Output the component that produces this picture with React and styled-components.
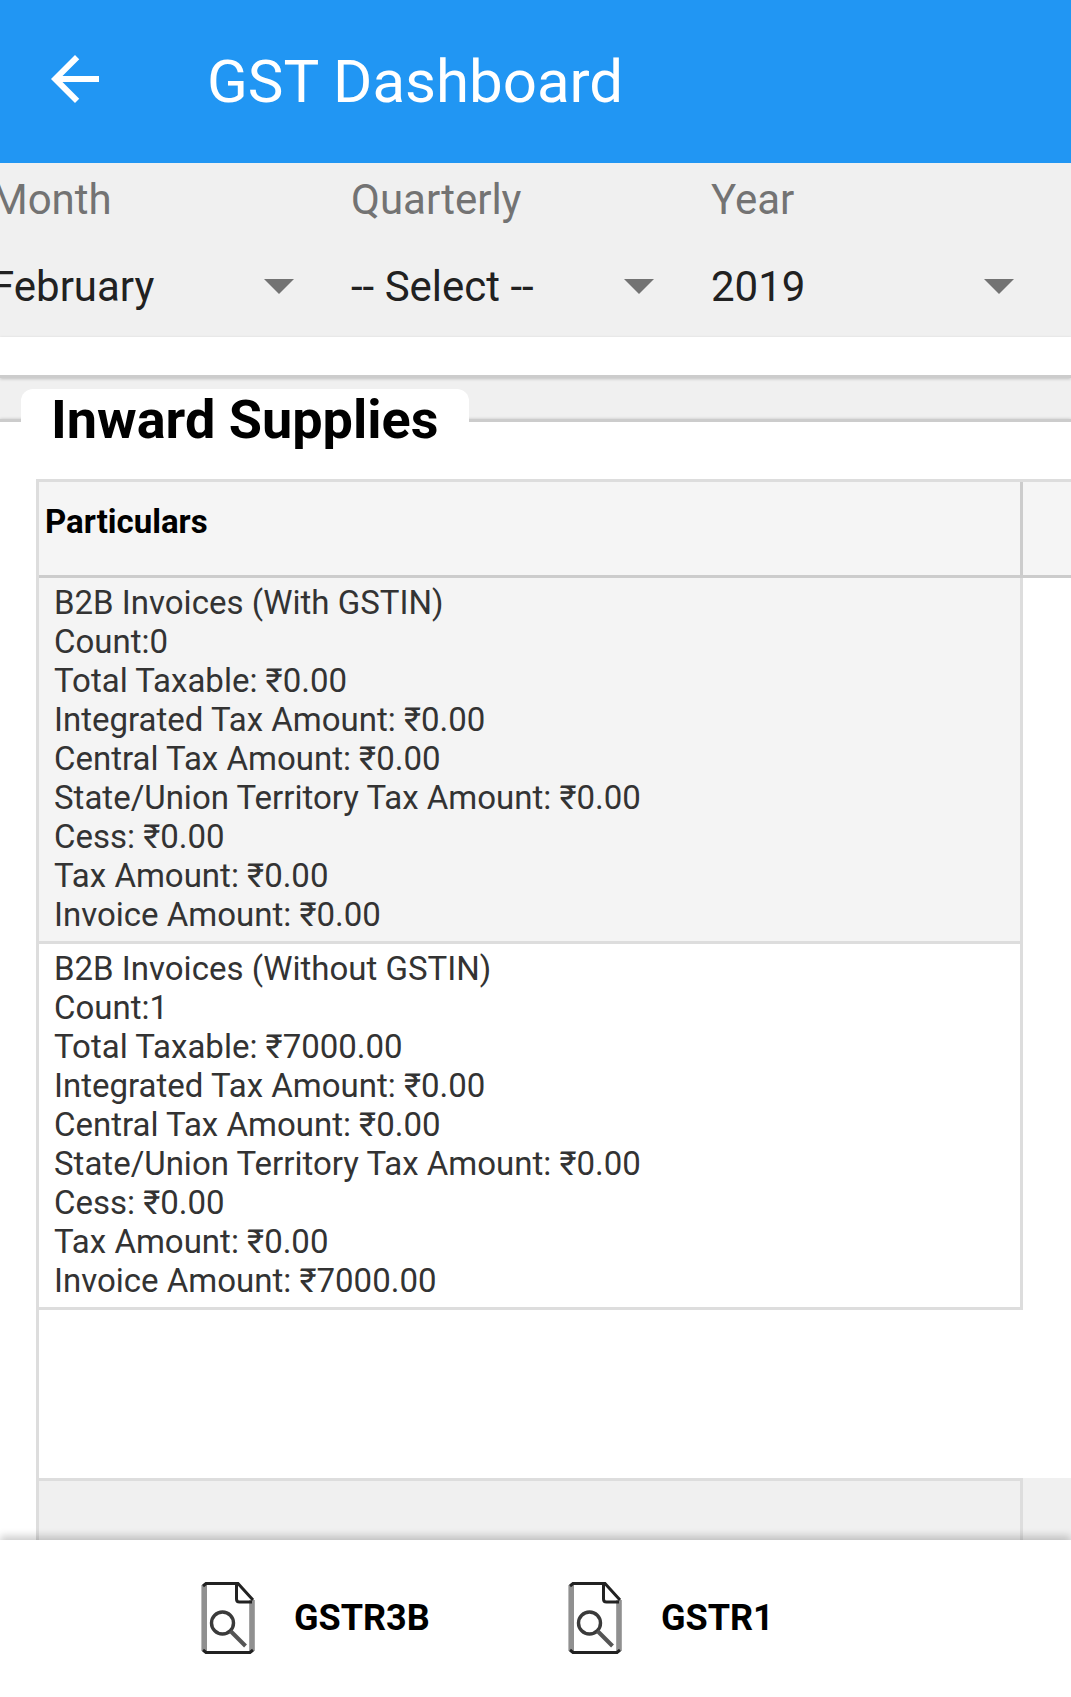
import React, { useState } from 'react';
import styled, { createGlobalStyle } from 'styled-components';
import { MdArrowBack } from 'react-icons/md';

const GlobalStyle = createGlobalStyle`
  * {
    box-sizing: border-box;
  }

  body {
    margin: 0;
    background: #f0f0f0;
    font-family: Roboto, sans-serif;
  }
`;

const Page = styled.div`
  display: flex;
  flex-direction: column;
  height: 100vh;
  overflow: hidden;
`;

const Header = styled.header`
  display: flex;
  flex: none;
  align-items: center;
  gap: 96px;
  height: 163px;
  padding: 0 39px 5px;
  background: #2196f3;
  color: white;
`;

const BackButton = styled.button`
  display: flex;
  padding: 0;
  border: none;
  background: none;
  color: inherit;
  font-size: 72px;
  cursor: pointer;
`;

const Title = styled.h1`
  margin: 0;
  padding-top: 5px;
  font-size: 60px;
  font-weight: 400;
  line-height: 72px;
`;

const Filters = styled.form`
  display: flex;
  flex: none;
  gap: 57px;
  height: 174px;
  margin-left: -9px;
  padding-top: 13px;
  background: #f0f0f0;
`;

const Field = styled.div`
  flex: 0 0 303px;
`;

const Label = styled.label`
  display: block;
  margin-bottom: 26px;
  color: #737373;
  font-size: 42px;
  line-height: 48px;
`;

const SelectBox = styled.div`
  display: grid;
  align-items: center;

  & > * {
    grid-area: 1 / 1;
  }
`;

const Select = styled.select`
  width: 100%;
  height: 72px;
  padding: 0;
  border: none;
  appearance: none;
  background: transparent;
  color: #212121;
  font-family: inherit;
  font-size: 42px;
`;

const Caret = styled.span`
  justify-self: end;
  border: 15px solid transparent;
  border-top-color: #737373;
  border-bottom: none;
  pointer-events: none;
`;

const Strip = styled.div`
  flex: none;
  height: 41px;
  border-bottom: 3px solid #ccc;
  background: white;
  box-shadow: 0 1px 3px rgba(0, 0, 0, 0.2);
`;

const Main = styled.main`
  flex: 1;
  min-height: 0;
  padding-top: 11px;
  overflow: hidden;
`;

const Supplies = styled.fieldset`
  min-width: 0;
  margin: 0;
  padding: 27px 0 0;
  border: none;
  border-top: 3px solid #ccc;
  background: white;
  box-shadow: 0 0 3px rgba(0, 0, 0, 0.2);
`;

const Legend = styled.legend`
  margin-left: 21px;
  padding: 0 31px 2px 30px;
  border-radius: 12px;
  background: white;
  color: black;
  font-size: 54px;
  font-weight: 700;
  line-height: 61px;
`;

const Grid = styled.div`
  margin-left: 36px;
  border-top: 3px solid #ddd;
  border-left: 3px solid #ddd;
`;

const Table = styled.table`
  width: 100%;
  border-collapse: separate;
  border-spacing: 0;
  table-layout: fixed;
`;

const ExtraCol = styled.col`
  width: 48px;
`;

const HeadCell = styled.th`
  height: 96px;
  padding: 20px 6px 0;
  border-bottom: 3px solid #ccc;
  border-right: ${props => (props.$divider ? '3px solid #ccc' : 'none')};
  background: #f5f5f5;
  color: black;
  font-size: 33px;
  line-height: 39px;
  text-align: left;
  vertical-align: top;
`;

const Cell = styled.td`
  padding: 5px 15px 7px;
  border-right: 3px solid #ddd;
  border-bottom: 3px solid #ddd;
  background: ${props => (props.$shaded ? '#f4f4f4' : 'white')};
  color: #333;
  font-size: 33px;
  line-height: 39px;
`;

const Spacer = styled.td`
  height: 168px;
`;

const FootCell = styled.td`
  height: 120px;
  border-top: ${props => (props.$divider ? '3px solid #ddd' : 'none')};
  border-right: ${props => (props.$divider ? '3px solid #ddd' : 'none')};
  background: #f0f0f0;
`;

const BottomBar = styled.footer`
  position: relative;
  display: flex;
  flex: none;
  height: 157px;
  padding: 0 0 2px 201px;
  background: white;
  box-shadow: 0 -4px 8px rgba(0, 0, 0, 0.2);
`;

const ReportButton = styled.button`
  display: flex;
  align-items: center;
  gap: 39px;
  min-width: 367px;
  padding: 0;
  border: none;
  background: none;
  color: black;
  font-family: inherit;
  font-size: 36px;
  font-weight: 700;
  cursor: pointer;
`;

const filters = [
  { id: 'month', label: 'Month', options: ['February', 'January', 'March'] },
  { id: 'quarterly', label: 'Quarterly', options: ['-- Select --', 'Jan - Mar', 'Apr - Jun'] },
  { id: 'year', label: 'Year', options: ['2019', '2018', '2017'] }
];

const supplies = [
  {
    name: 'B2B Invoices (With GSTIN)',
    count: 0,
    taxable: '0.00',
    integrated: '0.00',
    central: '0.00',
    state: '0.00',
    cess: '0.00',
    tax: '0.00',
    invoice: '0.00'
  },
  {
    name: 'B2B Invoices (Without GSTIN)',
    count: 1,
    taxable: '7000.00',
    integrated: '0.00',
    central: '0.00',
    state: '0.00',
    cess: '0.00',
    tax: '0.00',
    invoice: '7000.00'
  }
];

function ReportIcon() {
  return (
    <svg width="54" height="72" viewBox="0 0 54 72" fill="none" aria-hidden="true">
      <path d="M3.2 3v66M51 18v51" stroke="#909090" strokeWidth="5.6" />
      <path d="M2 4L5 1.5H37L52 18M2 68l3 2.5h44l3-2.5" stroke="#222" strokeWidth="3" />
      <path d="M35.5 2v15q0 3 3 3H51" stroke="#222" strokeWidth="3" />
      <circle cx="21.5" cy="41" r="11" stroke="#3a3a3a" strokeWidth="3.4" />
      <path d="M29.5 49L44.5 64" stroke="#555" strokeWidth="4" />
    </svg>
  );
}

function Filter({ id, label, options }) {
  const [value, setValue] = useState(options[0]);

  return (
    <Field>
      <Label htmlFor={id}>{label}</Label>
      <SelectBox>
        <Select id={id} value={value} onChange={(e) => setValue(e.target.value)}>
          {options.map((option) => (
            <option key={option}>{option}</option>
          ))}
        </Select>
        <Caret />
      </SelectBox>
    </Field>
  );
}

function App() {
  return (
    <Page>
      <GlobalStyle />
      <Header>
        <BackButton type="button" aria-label="Back"><MdArrowBack /></BackButton>
        <Title>GST Dashboard</Title>
      </Header>
      <Filters>
        {filters.map((filter) => (
          <Filter key={filter.id} {...filter} />
        ))}
      </Filters>
      <Strip />
      <Main>
        <Supplies>
          <Legend>Inward Supplies</Legend>
          <Grid>
            <Table>
              <colgroup>
                <col />
                <ExtraCol />
              </colgroup>
              <thead>
                <tr>
                  <HeadCell $divider>Particulars</HeadCell>
                  <HeadCell />
                </tr>
              </thead>
              <tbody>
                {supplies.map((row, index) => (
                  <tr key={row.name}>
                    <Cell $shaded={index % 2 === 0}>
                      <div>{row.name}</div>
                      <div>Count:{row.count}</div>
                      <div>Total Taxable: ₹{row.taxable}</div>
                      <div>Integrated Tax Amount: ₹{row.integrated}</div>
                      <div>Central Tax Amount: ₹{row.central}</div>
                      <div>State/Union Territory Tax Amount: ₹{row.state}</div>
                      <div>Cess: ₹{row.cess}</div>
                      <div>Tax Amount: ₹{row.tax}</div>
                      <div>Invoice Amount: ₹{row.invoice}</div>
                    </Cell>
                  </tr>
                ))}
                <tr>
                  <Spacer colSpan={2} />
                </tr>
              </tbody>
              <tfoot>
                <tr>
                  <FootCell $divider />
                  <FootCell />
                </tr>
              </tfoot>
            </Table>
          </Grid>
        </Supplies>
      </Main>
      <BottomBar>
        <ReportButton type="button"><ReportIcon />GSTR3B</ReportButton>
        <ReportButton type="button"><ReportIcon />GSTR1</ReportButton>
      </BottomBar>
    </Page>
  );
}

export default App;
